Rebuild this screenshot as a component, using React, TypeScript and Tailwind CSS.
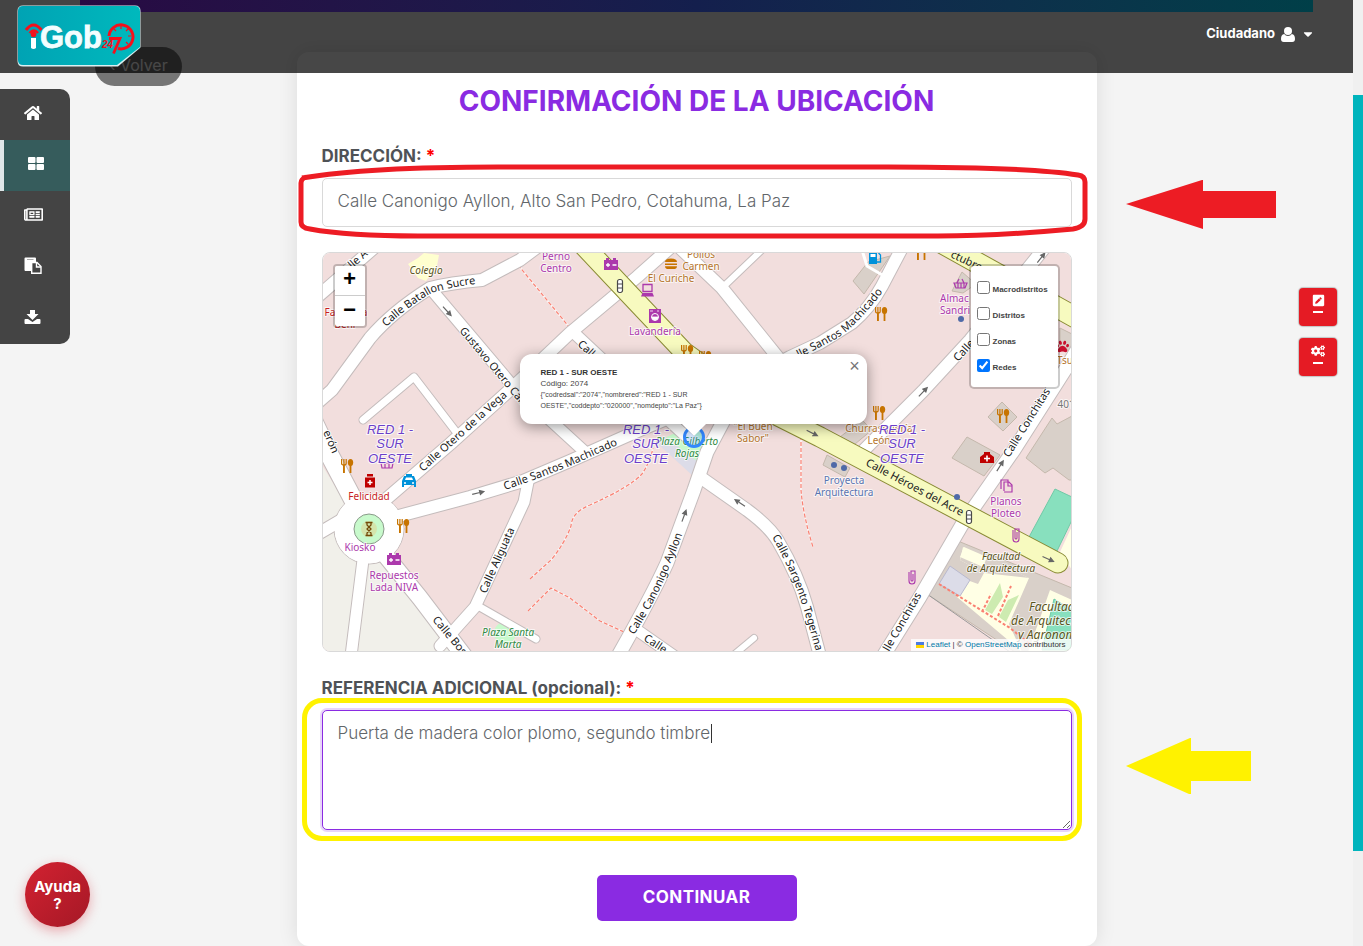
import React from "react";
import { FaHome, FaRegNewspaper, FaCaretDown, FaPenSquare, FaCogs, FaPaw } from "react-icons/fa";

type Road = { d: string; w: number };

const ROADS: Road[] = [
  { d: "M316 298L376 246", w: 12 },
  { d: "M316 404L332 390L370 338Q392 312 430 288Q450 283 482 280L520 260L540 245", w: 12 },
  { d: "M430 288L512 385L585 452", w: 11 },
  { d: "M385 500L450 444L512 388L570 333L637 277L672 246", w: 12 },
  { d: "M363 420L414 377L457 433", w: 7 },
  { d: "M308 410L328 452L356 505", w: 18 },
  { d: "M316 535L345 518", w: 12 },
  { d: "M395 517L470 497L523 481L570 461L640 430L700 405L790 357L820 343L852 323Q870 308 882 286L903 246", w: 12 },
  { d: "M363 560L351 656", w: 11 },
  { d: "M386 556L420 598L464 656", w: 16 },
  { d: "M528 482L524 502L475 607L440 646", w: 11 },
  { d: "M478 606L536 639", w: 7 },
  { d: "M724 420L707 452L694 490L667 563Q652 596 618 656", w: 13 },
  { d: "M700 477L747 510Q770 527 778 541Q798 575 807 607L820 656", w: 12 },
  { d: "M634 628L674 656", w: 11 },
  { d: "M730 658L754 638", w: 6 },
  { d: "M678 246L722 288L780 360", w: 12 },
  { d: "M722 288L766 246", w: 6 },
  { d: "M572 331L605 362L690 440", w: 11 },
  { d: "M862 452L923 391L970 340L1046 246", w: 12 },
  { d: "M1080 345L1065 370L1014 450L963 523L920 597L882 658", w: 13 },
];

const MAIN_ROADS: Road[] = [
  { d: "M584 246L632 297L684 352L762 408L820 437L1058 563", w: 19 },
  { d: "M940 242L1080 320", w: 20 },
];

const BUILDINGS = [
  "M868 262L890 256L864 294L853 281Z",
  "M962 272L976 284L963 293L952 291Z",
  "M1002 402L1017 417L1003 431L988 417Z",
  "M967 437L1000 455L984 476L952 458Z",
  "M1072 416L1057 424L1052 418L1026 458L1045 473L1053 468L1069 480H1072Z",
  "M827 455L850 468L845 477L823 465Z",
  "M862 420L872 430L855 444L840 437Z",
  "M1060 328L1072 334V352L1060 346Z",
  "M958 541L1072 588V652H1015L927 594Z",
];

const PATHS = "M518 265L570 328M530 579L551 560Q565 543 571 526Q572 512 590 505Q630 487 642 474Q650 462 653 448M528 611L551 588L570 598L600 621L624 632M801 430V490Q803 515 813 547";

function Eat({ x, y }: { x: number; y: number }) {
  return (
    <g transform={`translate(${x - 6} ${y - 7})`} fill="#c77400" stroke="#c77400">
      <path d="M0.6 0v4.5q0 1.5 2.3 1.5t2.3-1.500V0M2.9 0v14" fill="none" strokeWidth="1.2" />
      <path d="M2.900 6v8" strokeWidth="1.800" />
      <ellipse cx="9.500" cy="3.500" rx="2.700" ry="3.500" stroke="none" />
      <path d="M9.500 5v9" strokeWidth="1.800" />
    </g>
  );
}

function Battery({ x, y }: { x: number; y: number }) {
  return (
    <g transform={`translate(${x - 7} ${y - 6})`}>
      <path d="M0 2h2V0h3v2h4V0h3v2h2v10H0z" fill="#ac39ac" />
      <path d="M2 7h4M4 5v4M8.500 7h4" stroke="#fff" strokeWidth="1.300" />
    </g>
  );
}

function Arrow({ x, y, r }: { x: number; y: number; r: number }) {
  return (
    <path d="M-6 0H3M2-2L6 0L2 2Z" transform={`translate(${x} ${y}) rotate(${r})`} stroke="#666" fill="#666" strokeWidth="1.200" />
  );
}

function Signal({ x, y }: { x: number; y: number }) {
  return (
    <g transform={`translate(${x} ${y})`} stroke="#4a4a4a" fill="#fff">
      <rect x="-2.500" y="-6.500" width="5" height="13" rx="2" strokeWidth="1.200" />
      <path d="M-2.500-2h5M-2.500 2h5" />
    </g>
  );
}

function Clip({ x, y }: { x: number; y: number }) {
  return (
    <path d="M-3-5V4a3 3 0 0 0 6 0V-6H-1V3a1 1 0 0 0 2 0V-3" transform={`translate(${x} ${y})`} fill="none" stroke="#ac39ac" strokeWidth="1.100" />
  );
}

function MapDrawing() {
  return (
    <svg
      viewBox="323 253 748 398"
      preserveAspectRatio="xMidYMid slice"
      className="block h-full w-full font-['Noto_Sans',sans-serif]"
      role="img"
      aria-label="Mapa de Alto San Pedro"
    >
      <defs>
        <path id="st-batallon" d="M386 327Q410 305 432 293Q450 287 475 284" />
        <path id="st-canonigo" d="M634 635Q660 594 671 562Q678 548 685 526" />
        <path id="st-sargento" d="M772 537Q789 567 799 595Q808 622 816 652" />
        <path id="st-machicado" d="M799 358L836 339Q858 325 884 290" />
        <path id="st-santos" d="M505 490Q540 478 570 466L622 443" />
      </defs>
      <rect x="320" y="250" width="756" height="406" fill="#f2dedd" />
      <path d="M320 462L350 510L380 556L396 572L460 652H320Z" fill="#f1f0ea" />
      <path d="M408 264L418 258L424 253L439 255L437 266L426 281L418 278Z" fill="#ffffcf" />
      <path d="M660 440L694 424L706 440L698 465L690 462Z" fill="#c8facc" />
      <path d="M664 436L698 462L692 475L658 444Z" fill="#dcdce8" />
      <circle cx="505" cy="633" r="11" fill="#c8facc" />
      {BUILDINGS.map((d) => (
        <path key={d} d={d} fill="#d9d0c9" stroke="#c4b8ac" strokeWidth="1" />
      ))}
      <path d="M963 547L1029 578L1009 624L1022 652L957 597L967 580L978 584L984 573L960 560Z" fill="#ffffe5" />
      <path d="M984 573L960 560L965 547L1029 578Z" fill="#d9d0c9" />
      <path d="M964 547L987 557L983 567L960 557Z" fill="#ffffe5" />
      <path d="M1050 590L1072 600V652H1028Z" fill="#ffffe5" />
      <path d="M950 566L970 580L960 596L939 584Z" fill="#dcdce8" stroke="#b9b9cf" strokeWidth="1" />
      <path d="M1055 489L1072 497V520L1057 551L1029 537Z M1054 599L1072 610V650H1042Z" fill="#88e0be" stroke="#70c9a6" strokeWidth="1" />
      <path d="M1060 552L1072 526V570Z" fill="#ffffe5" />
      <path d="M1000 583L1003 597L992 614L985 610Z M1008 600L1019 595L1006 622L999 617Z" fill="#cdebb0" />
      <path d="M939 584L1010 628L1030 644M982 612L991 594M998 616L1011 586" stroke="#fa8072" strokeWidth="2" strokeDasharray="3 2" fill="none" />
      <path d="M927 594L1010 652" stroke="#999" strokeWidth="1" />
      <path d={PATHS} fill="none" stroke="#fff" strokeWidth="2" opacity="0.6" />
      <path d={PATHS} fill="none" stroke="#fa8072" strokeWidth="1.200" strokeDasharray="4 2" />
      <g fill="none" stroke="#c4bcbc" strokeLinecap="round" strokeLinejoin="round">
        {ROADS.map((r) => (
          <path key={r.d} d={r.d} strokeWidth={r.w + 2} />
        ))}
        <circle cx="369" cy="529" r="35" strokeWidth="1" />
      </g>
      <path d="M862 250L867 266L884 276" fill="none" stroke="#fff" strokeWidth="3" />
      <g fill="none" stroke="#fff" strokeLinecap="round" strokeLinejoin="round">
        {ROADS.map((r) => (
          <path key={r.d} d={r.d} strokeWidth={r.w} />
        ))}
        <circle cx="369" cy="529" r="34.500" fill="#fff" stroke="none" />
        <g stroke="#8a8b35">
          {MAIN_ROADS.map((r) => (
            <path key={r.d} d={r.d} strokeWidth={r.w + 2} />
          ))}
        </g>
        <g stroke="#f7fabf">
          {MAIN_ROADS.map((r) => (
            <path key={r.d} d={r.d} strokeWidth={r.w} />
          ))}
        </g>
      </g>
      <circle cx="369" cy="529" r="15" fill="#c8facc" stroke="#8a9a8a" strokeWidth="1" />
      <circle cx="369" cy="529" r="8" fill="#d4e5ac" />
      <path d="M365.500 522.500h7M365.500 535.500h7M367 523v2l4 4l-4 4v2M371 523v2l-4 4l4 4v2" stroke="#734a08" strokeWidth="1.300" fill="none" />

      <g fontSize="11" fill="#222" stroke="#fff" strokeWidth="2" paintOrder="stroke" strokeLinejoin="round">
        <text><textPath href="#st-batallon">Calle Batallon Sucre</textPath></text>
        <text><textPath href="#st-canonigo">Calle Canonigo Ayllon</textPath></text>
        <text><textPath href="#st-sargento">Calle Sargento Tegerina</textPath></text>
        <text><textPath href="#st-machicado">lle Santos Machicado</textPath></text>
        <text><textPath href="#st-santos">Calle Santos Machicado</textPath></text>
        <text transform="translate(352 269) rotate(-41)">lle A</text>
        <text transform="translate(459 331) rotate(50)">Gustavo Otero Calle</text>
        <text transform="translate(423 472) rotate(-42)">Calle Otero de la Vega</text>
        <text transform="translate(323 432) rotate(67)">erón</text>
        <text transform="translate(486 594) rotate(-66)">Calle Aliguata</text>
        <text transform="translate(432 620) rotate(50)">Calle Bosque</text>
        <text transform="translate(577 345) rotate(42)">Calle</text>
        <text transform="translate(643 640) rotate(33)">Calle</text>
        <text transform="translate(958 362) rotate(-47)">Calle</text>
        <text transform="translate(1009 458) rotate(-58)">Calle Conchitas</text>
        <text transform="translate(889 652) rotate(-60)">lle Conchitas</text>
        <g stroke="#f7fabf">
          <text transform="translate(865 465) rotate(28)">Calle Héroes del Acre</text>
          <text transform="translate(950 257) rotate(25)">ctubre</text>
        </g>
      </g>

      <g fontSize="10" textAnchor="middle" stroke="#fff" strokeOpacity="0.700" strokeWidth="2" paintOrder="stroke" strokeLinejoin="round">
        <g fill="#ac39ac">
          <text x="556" y="260">Perno</text>
          <text x="556" y="272">Centro</text>
          <text x="655" y="335">Lavandería</text>
          <text x="360" y="551">Kiosko</text>
          <text x="394" y="579">Repuestos</text>
          <text x="394" y="591">Lada NIVA</text>
          <text x="940" y="302" textAnchor="start">Almac</text>
          <text x="940" y="314" textAnchor="start">Sandri</text>
          <text x="1006" y="505">Planos</text>
          <text x="1006" y="517">Ploteo</text>
        </g>
        <g fill="#b5742c">
          <text x="701" y="258">Pollos</text>
          <text x="701" y="270">Carmen</text>
          <text x="671" y="282">El Curiche</text>
          <text x="753" y="430">"El Buen</text>
          <text x="753" y="442">Sabor"</text>
          <text x="879" y="432">Churrasquería</text>
          <text x="879" y="444">León</text>
          <text x="1065" y="364">Tsu</text>
        </g>
        <g fill="#c81e1e">
          <text x="369" y="500">Felicidad</text>
          <text x="346" y="316">Farmacia</text>
          <text x="345" y="328">Beni</text>
        </g>
        <g fill="#5a74b0">
          <text x="844" y="484">Proyecta</text>
          <text x="844" y="496">Arquitectura</text>
        </g>
        <g fontStyle="italic" fill="#2f8a43">
          <text x="687" y="445">Plaza Gilberto</text>
          <text x="687" y="457">Rojas</text>
          <text x="508" y="636">Plaza Santa</text>
          <text x="508" y="648">Marta</text>
        </g>
        <g fontStyle="italic" fill="#5a5420">
          <text x="426" y="274">Colegio</text>
          <text x="1001" y="560">Facultad</text>
          <text x="1001" y="572">de Arquitectura</text>
          <g fontSize="12" textAnchor="start">
            <text x="1029" y="611">Facultad</text>
            <text x="1011" y="625">de Arquitectura</text>
            <text x="1018" y="639">y Agronomía</text>
          </g>
        </g>
        <text x="1066" y="408" fill="#777">401</text>
      </g>

      <Eat x={347} y={466} />
      <Eat x={403} y={526} />
      <Eat x={687} y={352} />
      <Eat x={705} y={358} />
      <Eat x={881} y={314} />
      <Eat x={879} y={413} />
      <Eat x={1003} y={416} />
      <Eat x={921} y={253} />
      <Battery x={611} y={264} />
      <Battery x={394} y={559} />
      <Signal x={620} y={286} />
      <Signal x={969} y={517} />
      <Clip x={912} y={577} />
      <Clip x={1016} y={535} />
      <Arrow x={447} y={311} r={48} />
      <Arrow x={478} y={493} r={-14} />
      <Arrow x={684} y={516} r={-70} />
      <Arrow x={740} y={503} r={214} />
      <Arrow x={812} y={433} r={27} />
      <Arrow x={923} y={392} r={-46} />
      <Arrow x={1000} y={466} r={-58} />
      <Arrow x={1048} y={559} r={24} />
      <Arrow x={1041} y={258} r={-52} />

      <path d="M665 262q0-3.500 6-3.500t6 3.500zM665 263.500h12v1.500h-12zM665 266.300h12q0 2.700-2 2.700h-8q-2 0-2-2.700z" fill="#c77400" />
      <path d="M643 284.500h9v7h-9z" fill="none" stroke="#ac39ac" strokeWidth="1.300" />
      <path d="M642.500 293h10l1.500 3.500h-13z" fill="#ac39ac" />
      <rect x="649" y="309" width="12" height="14" fill="#ac39ac" />
      <circle cx="655" cy="317" r="3.500" fill="#ac39ac" stroke="#fff" strokeWidth="1" />
      <path d="M652 317h6a3 3 0 0 1-6 0M650 311h3M657 311h2" fill="#fff" stroke="#fff" strokeWidth="0.800" />
      <g fill="#0092da">
        <path d="M869 252h8v12h-8z" />
        <path d="M877 262h3.500v-7l-2-2" fill="none" stroke="#0092da" strokeWidth="1.300" />
        <path d="M870.500 257h5v-3h-5z" fill="#fff" />
        <path d="M402 481l2-5h2v-2h6v2h2l2 5v6h-2v-2h-10v2h-2z" />
        <path d="M405 480l1-2.500h6l1 2.500z" fill="#fff" />
        <circle cx="405" cy="483" r="1" fill="#fff" />
        <circle cx="413" cy="483" r="1" fill="#fff" />
      </g>
      <path d="M367 474h6v2.500h-6zM365 477.500h10v10h-10z" fill="#bf0000" />
      <path d="M367.500 482.500h5M370 480v5" stroke="#fff" strokeWidth="1.500" />
      <path d="M980 457l4-3v-2h6v2l4 3v6h-14z" fill="#bf0000" />
      <path d="M984 458.500h6M987 455.500v6" stroke="#fff" strokeWidth="1.600" />
      <FaPaw x={1056} y={340} size={13} color="#c8102e" />
      <g fill="none" stroke="#ac39ac" strokeWidth="1.200">
        <path d="M954 283h13l-2 5h-9zM957 283l2-4M964 283l-2-4M958 283v5M961 283v5M964 283v5" />
        <path d="M381 463h12l-1 5h-10zM385 463v5M389 463v5" />
        <path d="M1001 489v-9h7v2M1004 491v-9h5l3 3v7h-8M1008 482v4h4" />
      </g>
      <g fill="#4f6aa8">
        <circle cx="834" cy="465" r="3" />
        <circle cx="844" cy="468" r="3" />
        <circle cx="957" cy="497" r="3" />
        <circle cx="961" cy="319" r="3" />
      </g>
      <circle cx="694" cy="437" r="9.500" fill="#3388ff" fillOpacity="0.200" stroke="#3388ff" strokeWidth="3" />
      <g fontSize="13" fontStyle="italic" textAnchor="middle" fill="#6b3fc9" stroke="#fff" strokeWidth="2" strokeOpacity="0.800" paintOrder="stroke" className="font-['Liberation_Sans',sans-serif]">
        {[390, 646, 902].map((x) => (
          <g key={x}>
            <text x={x} y="434">RED 1 -</text>
            <text x={x} y="448">SUR</text>
            <text x={x} y="463">OESTE</text>
          </g>
        ))}
      </g>
    </svg>
  );
}

function Logo() {
  return (
    <svg viewBox="0 0 124 62" className="block h-[62px] w-[124px]" role="img" aria-label="iGob 24/7">
      <defs>
        <linearGradient id="logo-bg" x1="0" x2="1">
          <stop offset="0" stopColor="#00a3b4" />
          <stop offset="1" stopColor="#00b9bd" />
        </linearGradient>
      </defs>
      <path d="M6 .5h112q5.500 0 5.500 5.500v36.500L101 61.500H6q-5.500 0-5.500-5.500V6Q.5.5 6 .5z" fill="#d9f1f3" />
      <path d="M6 1h112q5 0 5 5.500v35.500L100 60H6q-5 0-5-5V6Q1 1 6 1z" fill="url(#logo-bg)" />
      <g fill="none" stroke="#f5101c" strokeWidth="3">
        <path d="M9 25q7.500-10 15.500 0" />
        <path d="M12.500 28q4.500-5 8.500 0" strokeWidth="2.500" />
      </g>
      <circle cx="16.500" cy="29.500" r="2.800" fill="#f5101c" />
      <path d="M14 33h5V43q-2.500 2-5 0z" fill="#fff" />
      <text x="24" y="44" fontSize="31" fontWeight="700" fill="#00808b" opacity="0.500" className="font-['Liberation_Sans',sans-serif]">Gob</text>
      <text x="23" y="43" fontSize="31" fontWeight="700" fill="#f2feff" stroke="#f2feff" strokeWidth="0.800" className="font-['Liberation_Sans',sans-serif]">Gob</text>
      <text x="85" y="43" fontSize="10" fontStyle="italic" fontWeight="700" fill="#f5101c" className="font-['Liberation_Sans',sans-serif]">24</text>
      <path d="M92 31a12 12 0 1 1 9 12.500" fill="none" stroke="#f5101c" strokeWidth="3" />
      <path d="M92 33.500h11l-6.500 15" fill="none" stroke="#f5101c" strokeWidth="2.800" />
      <path d="M104 21v3M114 31h-3M111 39l-2-2M111 24l-2 2M97 24l2 2" stroke="#f5101c" strokeWidth="1.200" />
    </svg>
  );
}

function GridIcon() {
  return (
    <svg viewBox="0 0 16 13" className="h-[13px] w-[16px]" fill="#fff" aria-hidden="true">
      <rect width="7.500" height="6" rx="1" />
      <rect x="8.500" width="7.500" height="6" rx="1" />
      <rect y="7" width="7.500" height="6" rx="1" />
      <rect x="8.500" y="7" width="7.500" height="6" rx="1" />
    </svg>
  );
}

function PasteIcon() {
  return (
    <svg viewBox="0 0 18 17" className="h-[17px] w-[18px]" aria-hidden="true">
      <path d="M1.500.5h9.500q1 0 1 1V5H7v9H1.500q-1 0-1-1V1.500q0-1 1-1z" fill="#fff" />
      <path d="M3 2.500h6.500" stroke="#aaa" strokeWidth="1.200" />
      <path d="M7.700 5.500h5.300l4 4v6.700H7.700z" fill="#444" stroke="#fff" strokeWidth="1.400" />
      <path d="M12.500 5.500v4.500H17" fill="none" stroke="#fff" strokeWidth="1.400" />
    </svg>
  );
}

function TrayIcon() {
  return (
    <svg viewBox="0 0 17 14" className="h-[14px] w-[17px]" fill="#fff" aria-hidden="true">
      <path d="M6 0h5v4h3.500L8.500 10L2.500 4H6z" />
      <path d="M1.500 9H4l4.500 3L13 9h2.500q1 0 1 1v3q0 1-1 1h-14q-1 0-1-1v-3q0-1 1-1z" />
    </svg>
  );
}

function UserIcon() {
  return (
    <svg viewBox="0 0 14 15" className="h-[15px] w-[14px]" fill="#fff" aria-hidden="true">
      <circle cx="7" cy="4" r="4" />
      <path d="M3.200 7Q0 7.500 0 12q0 3 2.800 3h8.400Q14 15 14 12q0-4.500-3.200-5Q9.500 9 7 9T3.200 7z" />
    </svg>
  );
}

const LAYERS = [
  { id: "macro", label: "Macrodistritos", on: false },
  { id: "distritos", label: "Distritos", on: false },
  { id: "zonas", label: "Zonas", on: false },
  { id: "redes", label: "Redes", on: true },
];

const NAV = [
  { label: "Inicio", icon: <FaHome size={18} /> },
  { label: "Servicios", icon: <GridIcon />, active: true },
  { label: "Noticias", icon: <FaRegNewspaper size={19} /> },
  { label: "Documentos", icon: <PasteIcon /> },
  { label: "Descargas", icon: <TrayIcon /> },
];

export default function App() {
  return (
    <div className="flex min-h-screen bg-[#f4f4f4] font-[Inter,sans-serif] text-[#4f5256]">
      <div className="relative min-w-0 flex-1 pt-[52px] pr-10 pl-20">
        <a href="#volver" className="absolute top-[47px] left-[95px] flex h-[39px] w-[87px] items-center justify-center rounded-full bg-black/52 pb-[3px] text-base text-white">
          ‹ Volver
        </a>

        <main className="mx-auto max-w-[800px] rounded-xl bg-white px-[25px] pt-[33px] pb-[25px] shadow-[0_0_20px_rgba(0,0,0,0.1)]">
          <h1 className="text-center text-[28px] leading-8 font-bold text-[#8a2be2]">CONFIRMACIÓN DE LA UBICACIÓN</h1>

          <div className="relative mt-[27px]">
            <label htmlFor="direccion" className="block text-[17px] leading-6 font-bold">
              DIRECCIÓN: <span className="text-[#ff0000]">*</span>
            </label>
            <input
              id="direccion"
              type="text"
              defaultValue="Calle Canonigo Ayllon, Alto San Pedro, Cotahuma, La Paz"
              className="mt-[10px] block h-[49px] w-full rounded-[5px] border border-[#d9d9d9] bg-white px-[15px] pb-1 text-[17px] font-light text-[#62666a] outline-none"
            />
            <svg viewBox="0 0 790 76" className="pointer-events-none absolute top-[20px] left-[-24px] h-[76px] w-[790px]" fill="none" aria-hidden="true">
              <path d="M4 14Q70 3 200 3H590Q730 3 780 11Q787 12 787 18V55Q787 63 775 65Q700 72 640 72H120Q50 72 12 65Q3 64 3 58V19Q3 15 8 13" stroke="#ed1c24" strokeWidth="5" />
            </svg>
            <svg viewBox="0 0 150 50" className="pointer-events-none absolute top-[36px] left-[804px] h-[50px] w-[150px]" aria-hidden="true">
              <path d="M0 24L76 0H77V11H150V38H77V49Z" fill="#ed1c24" />
            </svg>
          </div>

          <section className="relative mt-[25px] h-[400px] overflow-hidden rounded-lg border border-[#d9d9d9] font-['Liberation_Sans',sans-serif]">
            <MapDrawing />
            <div className="absolute top-[11px] left-[10px] flex flex-col overflow-hidden rounded-[4px] border-2 border-black/20 bg-clip-padding font-['Liberation_Mono',monospace] text-[22px] font-bold text-black">
              <button type="button" aria-label="Acercar" className="flex h-[30px] w-[30px] items-center justify-center border-b border-[#ccc] bg-white">+</button>
              <button type="button" aria-label="Alejar" className="flex h-[30px] w-[30px] items-center justify-center bg-white">−</button>
            </div>

            <div className="absolute top-[101px] left-[197px] h-[70px] w-[347px] rounded-xl bg-white pt-[13px] pl-[21px] text-[8px] text-[#444] shadow-[0_3px_14px_rgba(0,0,0,0.4)]">
              <p className="text-[8px] leading-[11px] font-bold text-[#333]">RED 1 - SUR OESTE</p>
              <p className="leading-[11px]">Código: 2074</p>
              <p className="text-[7px] leading-[11px]">
                {'{"codredsal":"2074","nombrered":"RED 1 - SUR'}
                <br />
                {'OESTE","coddepto":"020000","nomdepto":"La Paz"}'}
              </p>
              <button type="button" aria-label="Cerrar" className="absolute top-0 right-0 flex h-6 w-6 items-center justify-center text-[18px] text-[#757575]">×</button>
              <svg viewBox="0 0 24 12" className="absolute top-[70px] left-[162px] h-3 w-6" aria-hidden="true">
                <path d="M0 0H24L12 12Z" fill="#fff" />
              </svg>
            </div>

            <div className="absolute top-[11px] right-[11px] flex w-[91px] flex-col gap-[13px] rounded-[5px] border-2 border-black/20 bg-white bg-clip-padding pt-[15px] pb-[15px] pl-[6px] font-bold text-[#444]">
              {LAYERS.map((layer) => (
                <div key={layer.id} className="flex h-[13px] gap-[3px]">
                  <input id={layer.id} type="checkbox" defaultChecked={layer.on} className="h-[13px] w-[13px]" />
                  <label htmlFor={layer.id} className="pt-[2px] text-[8px] leading-[13px]">{layer.label}</label>
                </div>
              ))}
            </div>

            <p className="absolute right-0 bottom-0 flex items-center gap-[2px] bg-white/80 px-[5px] text-[8px] leading-[12px] whitespace-nowrap text-[#333]">
              <svg viewBox="0 0 8 6" className="h-[6px] w-[8px]" aria-hidden="true">
                <path fill="#4c7be1" d="M0 0h8v3H0z" />
                <path fill="#ffd500" d="M0 3h8v3H0z" />
              </svg>
              <span>
                <a href="#leaflet" className="text-[#0078a8]">Leaflet</a> | © <a href="#osm" className="text-[#0078a8]">OpenStreetMap</a> contributors
              </span>
            </p>
          </section>

          <div className="relative mt-6">
            <label htmlFor="referencia" className="block text-[17px] leading-6 font-bold">
              REFERENCIA ADICIONAL (opcional): <span className="text-[#ff0000]">*</span>
            </label>
            <textarea
              id="referencia"
              defaultValue="Puerta de madera color plomo, segundo timbre"
              className="mt-[10px] block h-[120px] w-full resize rounded-[5px] border border-[#8a2be2] bg-white px-[15px] py-[10px] text-[17px] leading-6 font-light text-[#62666a] shadow-[0_0_0_2px_rgba(138,43,226,0.2)] outline-none"
            />
            <span className="absolute top-[48px] left-[389px] h-[19px] w-px bg-[#333]" />
            <span className="pointer-events-none absolute top-[22px] right-[-10px] left-[-20px] h-[143px] rounded-[20px] border-[5px] border-[#fff200]" />
            <svg viewBox="0 0 126 56" className="pointer-events-none absolute top-[62px] left-[804px] h-[56px] w-[126px]" aria-hidden="true">
              <path d="M0 28L64 0H65V13H125V43H65V56H63Z" fill="#fff200" />
            </svg>
          </div>

          <button type="button" className="mx-auto mt-[45px] block h-[46px] w-[200px] rounded-[5px] bg-[#8a2be2] text-[17px] font-bold tracking-wide text-white">
            CONTINUAR
          </button>
        </main>

        <header className="absolute inset-x-0 top-0 h-[73px] bg-black/72">
          <div className="mr-10 ml-20 h-3 bg-linear-to-r from-[#280a43] via-[#141f4d] to-[#003f48]" />
          <a href="#inicio" className="absolute top-[5px] left-[17px]">
            <Logo />
          </a>
          <button type="button" className="absolute top-[22px] right-[38px] flex h-6 items-center gap-[6px] text-[13px] font-bold text-white">
            Ciudadano
            <UserIcon />
            <FaCaretDown size={14} />
          </button>
        </header>

        <nav className="absolute top-[89px] left-0 w-[70px] overflow-hidden rounded-r-[10px] bg-[#444]">
          {NAV.map((item) => (
            <a
              key={item.label}
              href="#menu"
              aria-label={item.label}
              className={
                item.active
                  ? "flex h-[51px] items-center border-l-4 border-[#dfe6e8] bg-[#365c5c] pb-1 pl-[24px] text-white"
                  : "flex h-[51px] items-center pb-1 pl-[24px] text-white"
              }
            >
              {item.icon}
            </a>
          ))}
        </nav>

        <div className="absolute top-[288px] right-4 flex flex-col gap-3 text-white">
          <button type="button" aria-label="Editar" className="flex h-[38px] w-[38px] flex-col items-center gap-1 rounded-[4px] bg-[#e51b24] pt-[6px] shadow-[0_0_1px_1px_rgba(0,0,0,0.2)]">
            <FaPenSquare size={13} />
            <span className="h-[2px] w-[10px] bg-white" />
          </button>
          <button type="button" aria-label="Configurar" className="flex h-[38px] w-[38px] flex-col items-center gap-1 rounded-[4px] bg-[#e51b24] pt-[6px] shadow-[0_0_1px_1px_rgba(0,0,0,0.2)]">
            <FaCogs size={14} />
            <span className="h-[2px] w-[10px] bg-white" />
          </button>
        </div>

        <button type="button" className="absolute bottom-[19px] left-[25px] h-[65px] w-[65px] rounded-full bg-linear-to-br from-[#d32231] to-[#a51826] text-[15px] leading-[17px] font-bold text-white shadow-[0_4px_12px_rgba(211,34,49,0.35)]">
          Ayuda
          <br />?
        </button>
      </div>

      <div className="relative w-[10px] bg-[#f0f0f0]">
        <div className="absolute inset-x-0 top-[10%] h-[80%] bg-[#00b4bc]" />
      </div>
    </div>
  );
}
